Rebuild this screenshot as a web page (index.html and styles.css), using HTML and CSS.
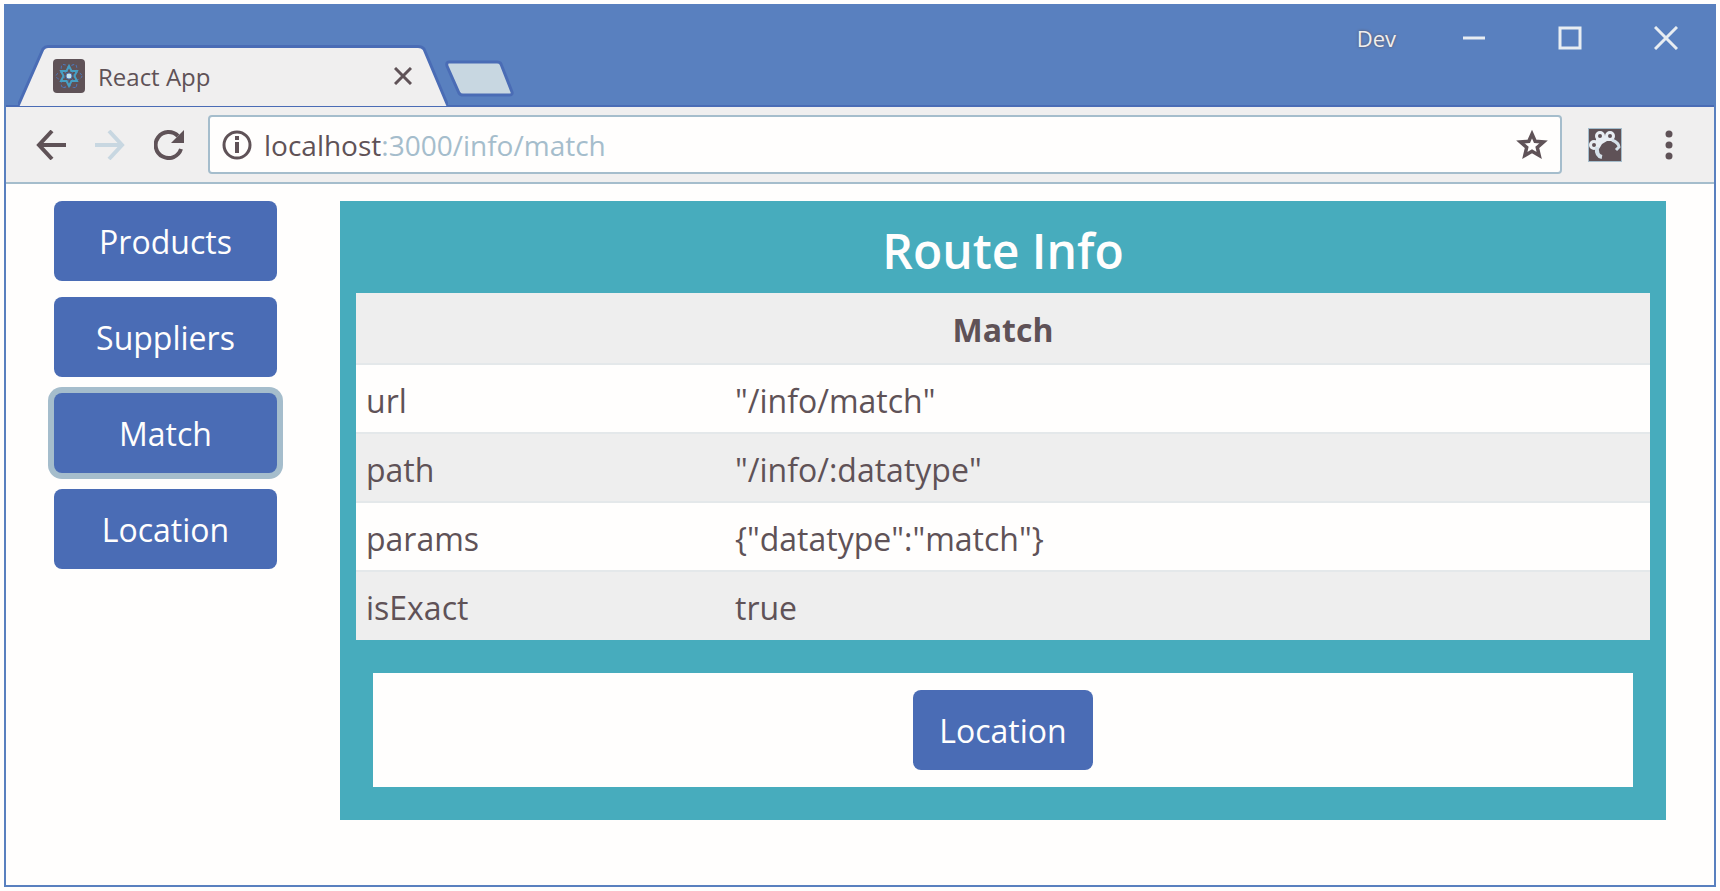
FILE: index.html
```html
<!DOCTYPE html>
<html lang="en">
<head>
<meta charset="utf-8">
<title>React App</title>
<link rel="stylesheet" href="styles.css">
</head>
<body>
<div class="window">
  <header class="titlebar">
    <div class="tab">
      <svg class="tab-shape" viewBox="0 0 430 62" preserveAspectRatio="none" aria-hidden="true"><path d="M0 61 L25 4 Q27 1.500 30 1.500 H400 Q404 1.500 406 4 L430 61" fill="#f0efef" stroke="#4a6cb5" stroke-width="3"/></svg>
      <div class="tab-content">
        <svg class="favicon" viewBox="0 0 34 36" aria-hidden="true"><rect x="1" y="1" width="32" height="34" rx="4" fill="#5f5257"/><g fill="none" stroke="#4d78bb" stroke-width="1" stroke-dasharray="3 2"><ellipse cx="17" cy="18" rx="13" ry="5"/><ellipse cx="17" cy="18" rx="13" ry="5" transform="rotate(60 17 18)"/><ellipse cx="17" cy="18" rx="13" ry="5" transform="rotate(120 17 18)"/></g><path d="M17 8 L19.500 13 L25 13 L22.500 18 L25 23 L19.500 23 L17 28 L14.500 23 L9 23 L11.500 18 L9 13 L14.500 13 Z" fill="none" stroke="#47a0c4" stroke-width="2"/><circle cx="17" cy="18" r="3" fill="#c8e4ea" stroke="#4d78bb"/></svg>
        <span class="tab-title">React App</span>
        <button class="icon-button tab-close" aria-label="Close tab"><svg width="18" height="18" viewBox="0 0 18 18"><path d="M1 1 L17 17 M17 1 L1 17" stroke="#5f5257" stroke-width="3"/></svg></button>
      </div>
    </div>
    <button class="icon-button new-tab" aria-label="New tab"><svg width="72" height="38" viewBox="0 0 72 38"><path d="M5 2 H53 Q56 2 57 4 L68 32 Q69 35 65 35 H19 Q16 35 15 33 L3 6 Q2 2 5 2 Z" fill="#c8d7e1" stroke="#4a6cb5" stroke-width="3"/></svg></button>
    <div class="window-controls">
      <span class="profile">Dev</span>
      <button class="icon-button" aria-label="Minimize"><svg width="24" height="24" viewBox="0 0 24 24"><path d="M1 12 H23" stroke="#e8edf2" stroke-width="3"/></svg></button>
      <button class="icon-button" aria-label="Maximize"><svg width="24" height="24" viewBox="0 0 24 24"><rect x="2" y="2" width="20" height="20" fill="none" stroke="#e8edf2" stroke-width="3"/></svg></button>
      <button class="icon-button" aria-label="Close"><svg width="24" height="24" viewBox="0 0 24 24"><path d="M1 1 L23 23 M23 1 L1 23" stroke="#e8edf2" stroke-width="3"/></svg></button>
    </div>
  </header>
  <div class="toolbar">
    <div class="history">
      <button class="icon-button" aria-label="Back"><svg width="30" height="30" viewBox="0 0 30 30"><path d="M16 1 L3 15 L16 29 M3 15 H30" fill="none" stroke="#5f5257" stroke-width="4"/></svg></button>
      <button class="icon-button" aria-label="Forward"><svg width="30" height="30" viewBox="0 0 30 30"><path d="M14 1 L27 15 L14 29 M27 15 H0" fill="none" stroke="#c8d7e1" stroke-width="4"/></svg></button>
      <button class="icon-button" aria-label="Reload"><svg width="30" height="30" viewBox="0 0 30 30"><path d="M27 19 A13 13 0 1 1 24 6" fill="none" stroke="#5f5257" stroke-width="4"/><path d="M30 0 V13 H17 Z" fill="#5f5257"/></svg></button>
    </div>
    <div class="address">
      <svg width="30" height="30" viewBox="0 0 30 30" aria-hidden="true"><circle cx="15" cy="15" r="13" fill="none" stroke="#5f5257" stroke-width="3"/><path d="M15 12 V23 M15 6 V10" stroke="#5f5257" stroke-width="4"/></svg>
      <span class="url"><span class="host">localhost</span>:3000/info/match</span>
      <button class="icon-button" aria-label="Bookmark"><svg width="32" height="32" viewBox="0 0 32 32"><path d="M16 5 L19.200 12.300 L27.500 13 L21.300 18.300 L23.200 26.500 L16 22.200 L8.800 26.500 L10.700 18.300 L4.500 13 L12.800 12.300 Z" fill="none" stroke="#5f5257" stroke-width="3.500"/></svg></button>
    </div>
    <button class="icon-button extension" aria-label="Extension"><svg width="34" height="34" viewBox="0 0 34 34"><rect x="0.500" y="0.500" width="33" height="33" fill="#5f5257" stroke="#a5bdcc"/><path d="M8 8 H26 V13 H19 L14 16 L11 21 H7 L8 13 Z" fill="#e8edf2"/><g fill="#5f5257" stroke="#e8edf2" stroke-width="3"><circle cx="12" cy="8" r="3.500"/><circle cx="22" cy="8" r="3.500"/><circle cx="6" cy="17" r="3.500"/></g><g fill="none" stroke="#d5e0e8"><path d="M9 19 Q8 28 14 29" stroke-width="4"/><path d="M24 12 Q31 15 31 19 L28 22" stroke-width="3"/></g></svg></button>
    <button class="icon-button" aria-label="Menu"><svg width="10" height="32" viewBox="0 0 10 32"><g fill="#5f5257"><circle cx="5" cy="5" r="3.500"/><circle cx="5" cy="16" r="3.500"/><circle cx="5" cy="27" r="3.500"/></g></svg></button>
  </div>
  <main class="page">
    <nav class="nav">
      <button class="btn">Products</button>
      <button class="btn">Suppliers</button>
      <button class="btn active">Match</button>
      <button class="btn">Location</button>
    </nav>
    <section class="panel">
      <h1>Route Info</h1>
      <table>
        <colgroup><col class="key-column"><col></colgroup>
        <thead><tr><th colspan="2">Match</th></tr></thead>
        <tbody>
          <tr><td>url</td><td>"/info/match"</td></tr>
          <tr><td>path</td><td>"/info/:datatype"</td></tr>
          <tr><td>params</td><td>{"datatype":"match"}</td></tr>
          <tr><td>isExact</td><td>true</td></tr>
        </tbody>
      </table>
      <div class="actions"><button class="btn">Location</button></div>
    </section>
  </main>
</div>
</body>
</html>
```
FILE: styles.css
```css
* { box-sizing: border-box; }
body {
  margin: 0;
  padding: 4px;
  min-height: 100vh;
  display: flex;
  background: #fffefd;
  color: #5f5257;
  font-family: "Open Sans", "Noto Sans", sans-serif;
  font-size: 32px;
}
.window {
  flex: 1;
  display: flex;
  flex-direction: column;
  border: 2px solid #5980bf;
}
.icon-button {
  display: flex;
  padding: 0;
  border: 0;
  background: none;
}
.titlebar {
  display: flex;
  height: 101px;
  padding-left: 12px;
  background: #5980bf;
  border-bottom: 2px solid #4a6cb5;
}
.tab {
  display: grid;
  width: 430px;
  height: 62px;
  align-self: flex-end;
  margin-bottom: -2px;
}
.tab-shape, .tab-content { grid-area: 1 / 1; }
.tab-shape { width: 100%; height: 62px; }
.tab-content {
  display: flex;
  align-items: center;
  gap: 12px;
  padding: 0 36px 0 34px;
}
.favicon { width: 34px; height: 36px; }
.tab-title { flex: 1; font-size: 24px; }
.new-tab { align-self: flex-end; margin: 0 0 7px -4px; }
.window-controls {
  display: flex;
  align-items: center;
  gap: 72px;
  height: 64px;
  margin-left: auto;
  padding-right: 36px;
}
.profile {
  margin-right: -6px;
  color: #f0efef;
  font-size: 22px;
  text-shadow: 0 0 3px #5f5257;
}
.toolbar {
  display: flex;
  align-items: center;
  height: 77px;
  padding: 0 40px 0 30px;
  background: #f0efef;
  border-bottom: 2px solid #a5bdcc;
}
.history { display: flex; gap: 29px; margin-right: 24px; }
.address {
  flex: 1;
  display: flex;
  align-items: center;
  gap: 12px;
  height: 59px;
  padding: 0 12px;
  border: 2px solid #a5bdcc;
  border-radius: 4px;
  background: #fffefd;
}
.url { flex: 1; color: #a5bdcc; font-size: 28px; }
.host { color: #5f5257; }
.extension { margin: 0 42px 0 26px; }
.page {
  flex: 1;
  display: flex;
  align-items: flex-start;
  gap: 63px;
  padding: 17px 48px 0;
}
.nav {
  display: flex;
  flex-direction: column;
  flex: 0 0 223px;
  gap: 16px;
}
.btn {
  height: 80px;
  padding: 1px 26px 0;
  border: 0;
  border-radius: 8px;
  background: #4a6cb5;
  color: #fffefd;
  font: inherit;
}
.btn.active { box-shadow: 0 0 0 6px #a5bdcc; }
.panel {
  flex: 1;
  padding: 16px 16px 33px;
  background: #47acbd;
}
h1 {
  margin: 0;
  color: #fffefd;
  font-size: 48px;
  font-weight: 600;
  line-height: 68px;
  padding-bottom: 8px;
  text-align: center;
}
table {
  width: 100%;
  table-layout: fixed;
  border-collapse: collapse;
  background: #fffefd;
}
.key-column { width: 369px; }
th, td {
  height: 69px;
  padding: 3px 10px 0;
  text-align: left;
}
th { height: 71px; text-align: center; }
tr { border-bottom: 2px solid #e4e8ea; }
tbody tr:last-child { border-bottom: 0; }
thead tr, tbody tr:nth-child(even) { background: #eeeeee; }
.actions {
  display: flex;
  justify-content: center;
  margin: 33px 17px 0;
  padding: 17px;
  background: #fffefd;
}
```
